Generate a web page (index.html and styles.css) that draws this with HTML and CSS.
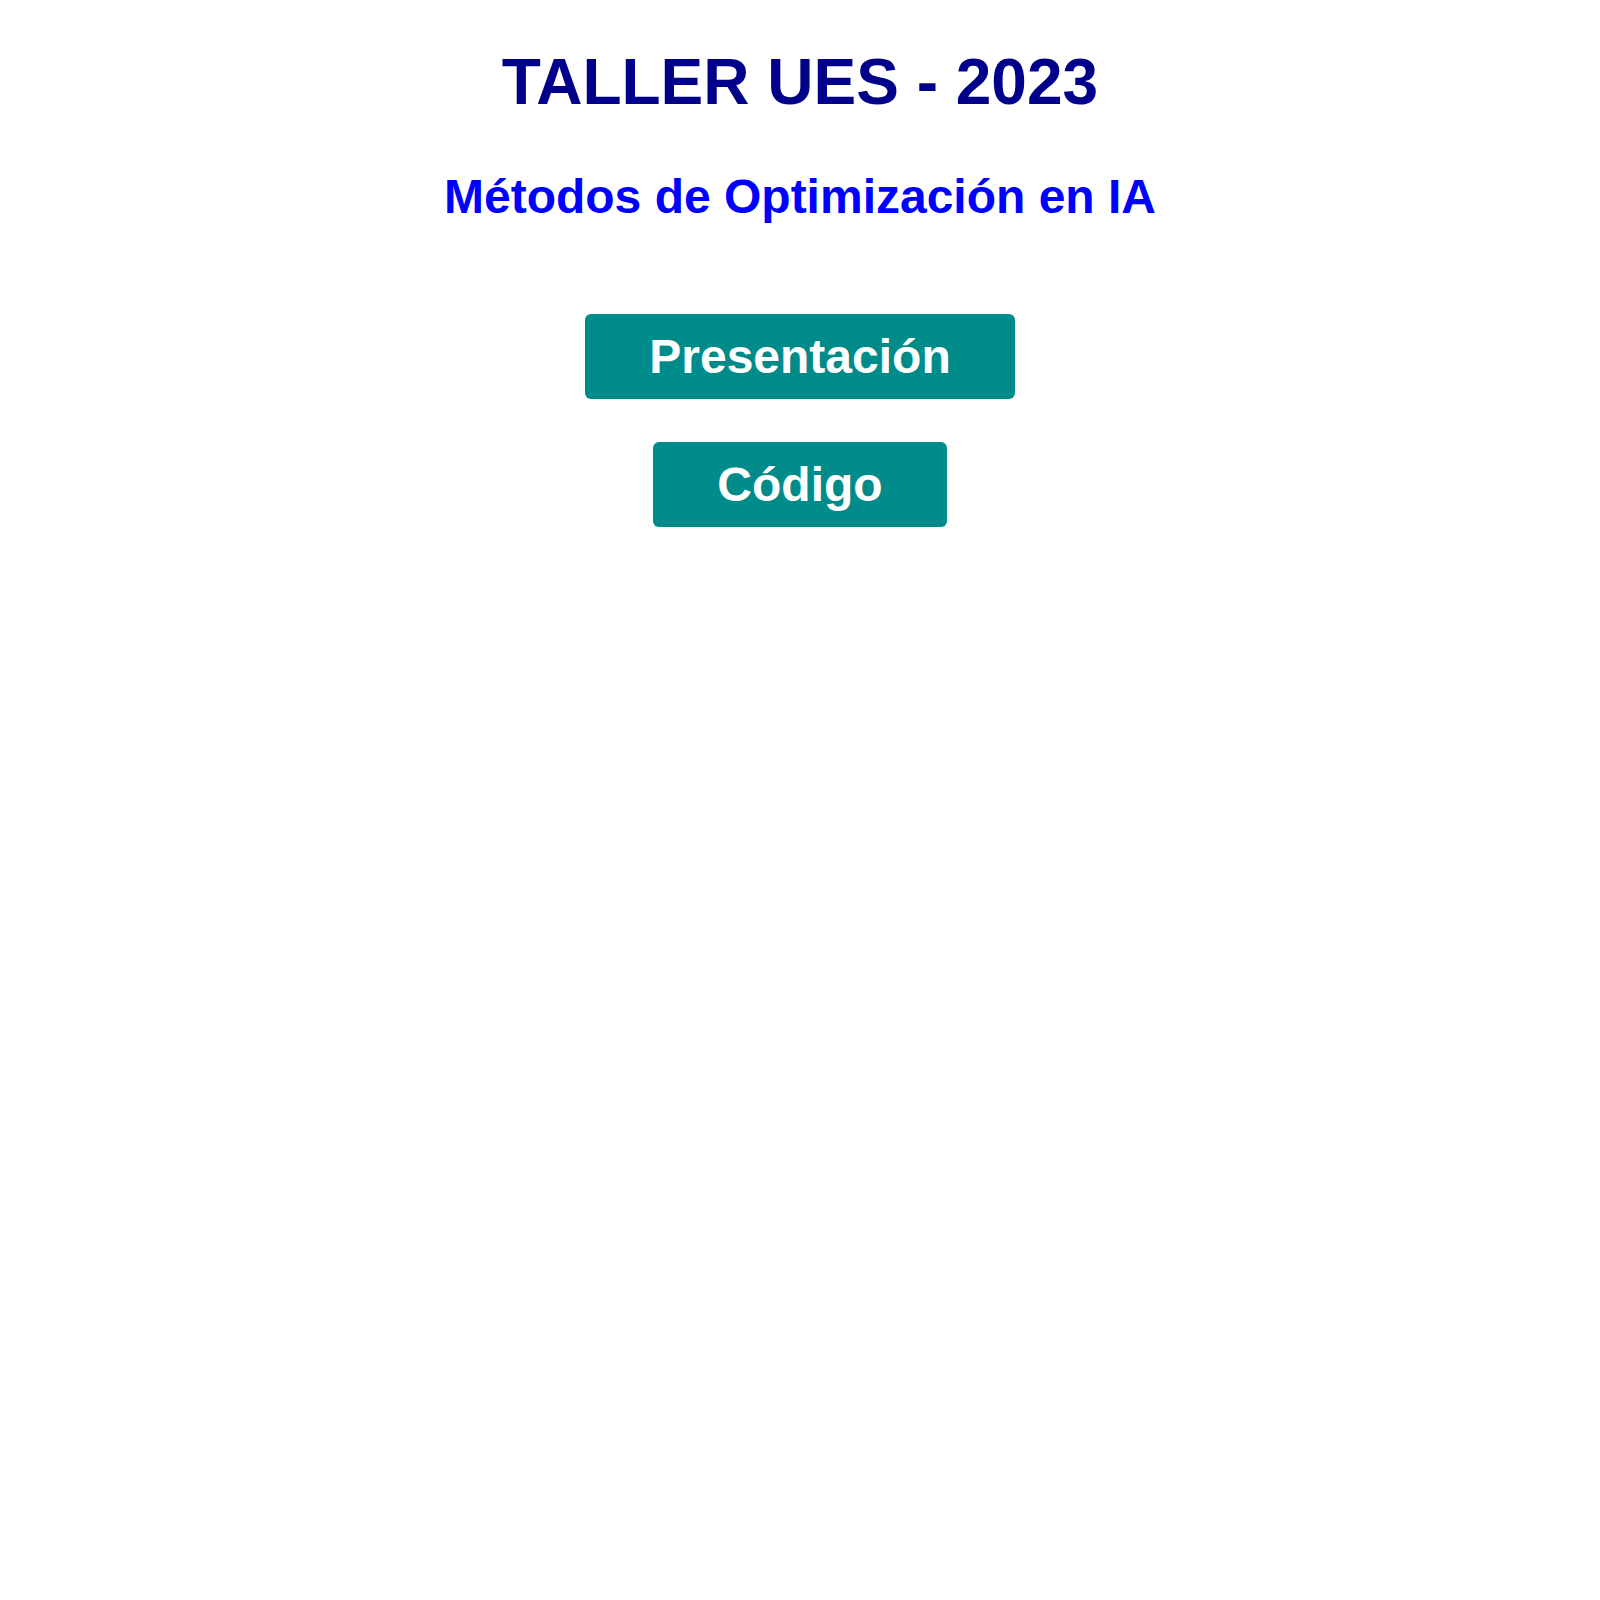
FILE: index.html
```html
<!DOCTYPE html>
<html lang="es">
<head>
<meta charset="utf-8">
<title>TALLER UES - 2023</title>
<link rel="stylesheet" href="styles.css">
</head>
<body>
<main class="page">
  <h1 class="title">TALLER UES - 2023</h1>
  <h2 class="subtitle">Métodos de Optimización en IA</h2>
  <nav class="links">
    <a class="btn" href="#">Presentación</a>
    <a class="btn" href="#">Código</a>
  </nav>
</main>
</body>
</html>
```

FILE: styles.css
```css
html, body {
  margin: 0;
  padding: 0;
  background: #ffffff;
}

.page {
  display: flex;
  flex-direction: column;
  align-items: center;
  font-family: "Liberation Sans", Arial, sans-serif;
  font-weight: bold;
  padding-top: 46px;
}

.title {
  margin: 0;
  font-size: 64px;
  line-height: 73.6px;
  color: #00008b;
  font-weight: bold;
}

.subtitle {
  margin: 49px 0 0 0;
  font-size: 48px;
  line-height: 55.2px;
  color: #0000ff;
  font-weight: bold;
}

.links {
  margin-top: 90px;
  display: flex;
  flex-direction: column;
  align-items: center;
  gap: 43px;
}

.btn {
  display: block;
  background: #008b8b;
  color: #ffffff;
  text-decoration: none;
  font-size: 48px;
  line-height: 55.2px;
  padding: 15px 64px;
  border-radius: 6px;
}
```
